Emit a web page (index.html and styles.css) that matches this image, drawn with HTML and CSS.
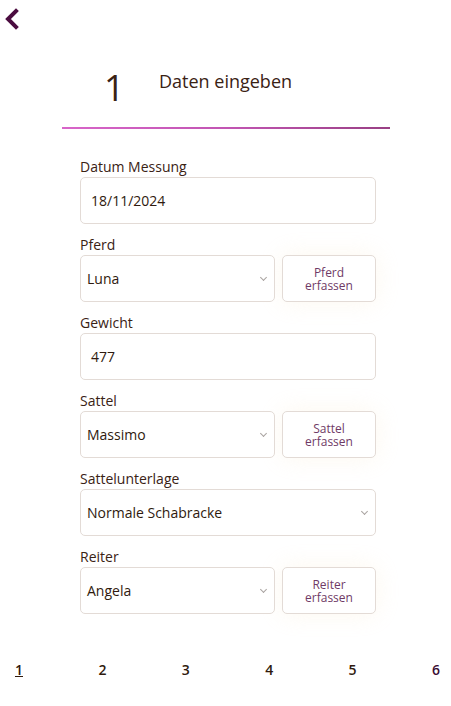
FILE: index.html
```html
<!DOCTYPE html>
<html lang="de">
<head>
<meta charset="utf-8">
<title>Daten eingeben</title>
<link rel="stylesheet" href="styles.css">
</head>
<body>
<div class="page">
  <header class="topbar">
    <a class="back" href="#" aria-label="Zurück">
      <svg width="16" height="22" viewBox="0 0 16 22"><path d="M12 3 L4 11 L12 19" fill="none" stroke="#4b0d40" stroke-width="4" stroke-linecap="square"/></svg>
    </a>
  </header>

  <div class="step-head">
    <span class="step-num">1</span>
    <span class="step-title">Daten eingeben</span>
  </div>
  <div class="step-line"></div>

  <form class="form">
    <div class="field">
      <label class="label">Datum Messung</label>
      <div class="input">18/11/2024</div>
    </div>
    <div class="field">
      <label class="label">Pferd</label>
      <div class="row">
        <div class="input select">Luna<span class="chev"></span></div>
        <button type="button" class="btn">Pferd<br>erfassen</button>
      </div>
    </div>
    <div class="field">
      <label class="label">Gewicht</label>
      <div class="input">477</div>
    </div>
    <div class="field">
      <label class="label">Sattel</label>
      <div class="row">
        <div class="input select">Massimo<span class="chev"></span></div>
        <button type="button" class="btn">Sattel<br>erfassen</button>
      </div>
    </div>
    <div class="field">
      <label class="label">Sattelunterlage</label>
      <div class="input select">Normale Schabracke<span class="chev"></span></div>
    </div>
    <div class="field">
      <label class="label">Reiter</label>
      <div class="row">
        <div class="input select">Angela<span class="chev"></span></div>
        <button type="button" class="btn">Reiter<br>erfassen</button>
      </div>
    </div>
  </form>

  <nav class="pager">
    <a class="page-link current" href="#">1</a>
    <a class="page-link" href="#">2</a>
    <a class="page-link" href="#">3</a>
    <a class="page-link" href="#">4</a>
    <a class="page-link" href="#">5</a>
    <a class="page-link last" href="#">6</a>
  </nav>
</div>
</body>
</html>
```

FILE: styles.css
```css
* { box-sizing: border-box; }
html, body {
  margin: 0;
  padding: 0;
  background: #ffffff;
}
body {
  font-family: "Open Sans", "Noto Sans", sans-serif;
  color: #3a2214;
  width: 451px;
  height: 706px;
  overflow: hidden;
}
.page {
  display: flex;
  flex-direction: column;
}
.topbar {
  height: 36px;
  padding: 8px 0 0 4px;
}
.back {
  display: block;
  width: 16px;
  height: 22px;
}
.back svg { display: block; }

.step-head {
  display: flex;
  align-items: flex-start;
  margin-top: 32px;
  padding-left: 104px;
  height: 47px;
}
.step-num {
  font-size: 36px;
  font-weight: 400;
  line-height: 40px;
  width: 55px;
}
.step-title {
  font-size: 18px;
  line-height: 24px;
  margin-top: 1px;
}
.step-line {
  margin: 12px 0 0 62px;
  width: 328px;
  height: 2px;
  background: linear-gradient(90deg, #d865c9, #c255b3 50%, #994084);
}

.form {
  display: flex;
  flex-direction: column;
  gap: 11px;
  width: 296px;
  margin: 28px 0 0 80px;
}
.field {
  display: flex;
  flex-direction: column;
}
.label {
  font-size: 14px;
  line-height: 20px;
  color: #3a2214;
}
.row {
  display: flex;
  gap: 7px;
}
.row .input { flex: 1; }
.input {
  position: relative;
  height: 47px;
  flex: none;
  border: 1px solid #e3dbd6;
  border-radius: 5px;
  padding: 0 0 0 10px;
  display: flex;
  align-items: center;
  font-size: 14px;
  color: #2f1a0e;
  background: #fff;
}
.select { padding-left: 6px; }
.chev {
  position: absolute;
  right: 8px;
  top: 19px;
  width: 5px;
  height: 5px;
  border-right: 1px solid #a9a3a0;
  border-bottom: 1px solid #a9a3a0;
  transform: rotate(45deg);
}
.btn {
  width: 94px;
  height: 47px;
  flex: none;
  border: 1px solid #e3dbd6;
  border-radius: 5px;
  background: #fff;
  font-family: "Open Sans", "Noto Sans", sans-serif;
  font-size: 12px;
  line-height: 13px;
  color: #6f3a66;
  padding: 0;
  box-shadow: 0 0 24px rgba(252, 244, 228, 0.6);
}

.pager {
  display: flex;
  justify-content: space-between;
  margin-top: 46px;
  padding: 0 10px 0 14px;
}
.page-link {
  font-size: 14px;
  font-weight: 600;
  line-height: 20px;
  color: #2f1a0e;
  text-decoration: none;
  width: 10px;
  text-align: center;
}
.page-link.current { text-decoration: underline; }
.page-link.last { color: #3a0c33; }
```
